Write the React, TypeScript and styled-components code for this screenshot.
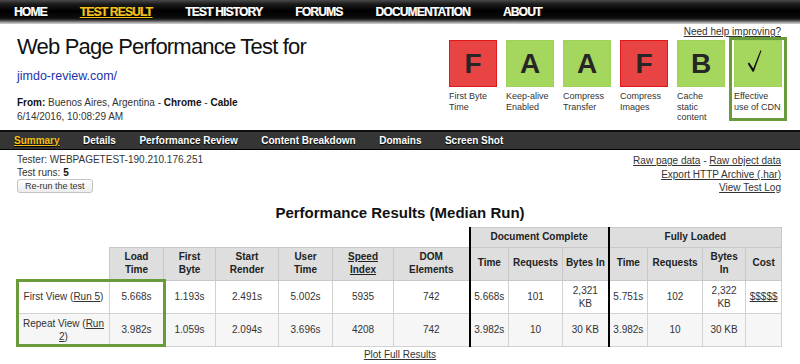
import React from "react";
import styled, { createGlobalStyle, css } from "styled-components";

const Global = createGlobalStyle`
  html, body { margin: 0; padding: 0; background: #fff; }
  body {
    font-family: "Liberation Sans", Arial, Helvetica, sans-serif;
    color: #222;
    width: 800px;
    height: 364px;
    overflow: hidden;
  }
  a { color: inherit; }
`;

const Page = styled.div`
  width: 800px;
`;

const TopNav = styled.nav`
  height: 24px;
  box-sizing: border-box;
  display: flex;
  align-items: center;
  gap: 33px;
  padding: 0 0 1px 14px;
  background: linear-gradient(
    to bottom,
    #4a4a4a 0px,
    #1c1c1c 4px,
    #000 11px,
    #0c0c0c 18px,
    #333 20px,
    #8c8c8c 22px,
    #d8d8d8 24px
  );
`;

const TopLink = styled.a<{ $active?: boolean }>`
  font-size: 12px;
  font-weight: 700;
  letter-spacing: -0.8px;
  color: #fff;
  text-decoration: none;
  text-shadow: 0 1px 1px #000, 0.4px 0 0 currentColor;
  white-space: nowrap;
  ${(p) =>
    p.$active &&
    css`
      color: #f4c21a;
      text-decoration: underline;
      text-underline-offset: 1px;
    `}
`;

const Header = styled.header`
  height: 106px;
  display: flex;
  justify-content: space-between;
  padding: 0 18px 0 17px;
`;

const TitleBlock = styled.div`
  padding-top: 10px;
`;

const Title = styled.h1`
  margin: 0;
  font-size: 22px;
  line-height: 26px;
  font-weight: 400;
  letter-spacing: -0.8px;
  color: #111;
`;

const UrlLink = styled.a`
  display: block;
  margin-top: 9px;
  font-size: 12.5px;
  line-height: 15px;
  color: #2233a8;
  text-decoration: none;
`;

const MetaLine = styled.div<{ $first?: boolean }>`
  font-size: 10px;
  line-height: 13.5px;
  color: #333;
  margin-top: ${(p) => (p.$first ? "12px" : "0")};
  b { color: #111; }
`;

const GradesBlock = styled.div`
  display: flex;
  flex-direction: column;
  align-items: flex-end;
  padding-top: 2px;
`;

const HelpLink = styled.a`
  font-size: 10px;
  line-height: 12px;
  color: #333;
  text-decoration: underline;
  margin-right: 1px;
`;

const Grades = styled.div`
  display: flex;
  gap: 9px;
  margin-top: 2px;
`;

const GradeItem = styled.div<{ $highlight?: boolean }>`
  position: relative;
  width: 48px;
  ${(p) =>
    p.$highlight &&
    css`
      &::after {
        content: "";
        position: absolute;
        top: -3px;
        left: -5px;
        right: -5px;
        height: 84px;
        border: 3px solid #6a9b3a;
        box-sizing: border-box;
        pointer-events: none;
      }
    `}
`;

const GradeBox = styled.div<{ $tone: "bad" | "good" }>`
  width: 48px;
  height: 47px;
  box-sizing: border-box;
  display: flex;
  align-items: center;
  justify-content: center;
  font-size: 28px;
  font-weight: 700;
  color: #262626;
  background: ${(p) => (p.$tone === "bad" ? "#e84444" : "#a5d65e")};
  border: 1px solid ${(p) => (p.$tone === "bad" ? "#e01818" : "#9fd058")};
`;

const GradeLabel = styled.div`
  margin-top: 4px;
  font-size: 9px;
  line-height: 10.5px;
  color: #333;
`;

const SubNav = styled.nav`
  height: 20px;
  box-sizing: border-box;
  display: flex;
  align-items: center;
  gap: 23.5px;
  padding: 0 0 0 14px;
  background: #353535;
  border-top: 2px solid #0e0e0e;
  border-bottom: 1px solid #000;
`;

const SubLink = styled.a<{ $active?: boolean }>`
  font-size: 10px;
  font-weight: 700;
  color: #fff;
  text-decoration: none;
  text-shadow: 0 1px 1px #000;
  white-space: nowrap;
  ${(p) =>
    p.$active &&
    css`
      color: #f4c21a;
      text-decoration: underline;
    `}
`;

const Info = styled.section`
  display: flex;
  justify-content: space-between;
  padding: 3px 19px 0 17px;
`;

const InfoLeft = styled.div`
  font-size: 10px;
  line-height: 13px;
  color: #333;
  b { color: #111; }
`;

const RerunButton = styled.button`
  display: block;
  height: 14px;
  padding: 0 7px;
  font-family: inherit;
  font-size: 9px;
  line-height: 12px;
  color: #333;
  background: linear-gradient(#fff, #ececec);
  border: 1px solid #c4c4c4;
  border-radius: 3px;
`;

const InfoRight = styled.div`
  text-align: right;
  font-size: 10px;
  line-height: 13.5px;
  color: #333;
  padding-top: 1px;
  a { text-decoration: underline; }
`;

const Heading = styled.h2`
  margin: 9px 0 0;
  text-align: center;
  font-size: 15px;
  line-height: 18px;
  font-weight: 700;
  color: #111;
`;

const TableWrap = styled.div`
  position: relative;
  margin: 5px 19px 0 17px;
`;

const Highlight = styled.div`
  position: absolute;
  left: -1px;
  top: 52px;
  width: 150px;
  height: 68px;
  border: 3px solid #6a9b3a;
  box-sizing: border-box;
  pointer-events: none;
`;

const Table = styled.table`
  width: 764px;
  table-layout: fixed;
  border-collapse: collapse;
  font-size: 10px;
  color: #333;
`;

const Th = styled.th<{ $sep?: boolean; $blank?: boolean; $h: number }>`
  height: ${(p) => p.$h}px;
  padding: 0 2px;
  box-sizing: border-box;
  font-weight: 700;
  line-height: 12.5px;
  color: #222;
  text-align: center;
  vertical-align: middle;
  background: ${(p) => (p.$blank ? "transparent" : "#dedede")};
  border: ${(p) => (p.$blank ? "none" : "1px solid #c8c8c8")};
  ${(p) => p.$sep && css`border-left: 2px solid #000;`}
  a { text-decoration: underline; color: #222; }
`;

const Tr = styled.tr<{ $alt?: boolean }>`
  background: ${(p) => (p.$alt ? "#f6f6f6" : "#fff")};
`;

const Td = styled.td<{ $sep?: boolean }>`
  height: 33px;
  padding: 0 2px;
  box-sizing: border-box;
  text-align: center;
  vertical-align: middle;
  line-height: 13px;
  border: 1px solid #d2d2d2;
  ${(p) => p.$sep && css`border-left: 2px solid #000;`}
  a { text-decoration: underline; color: #333; }
`;

const PlotLink = styled.a`
  display: block;
  width: fit-content;
  margin: 1px auto 0;
  font-size: 10px;
  line-height: 13px;
  color: #333;
  text-decoration: underline;
`;

const Check = () => (
  <svg width="48" height="47" viewBox="0 0 48 47" aria-hidden="true">
    <path
      d="M13.2 23.6 L14.8 22.4 L19 28.6 L26.6 9.8 L27.6 10.3 L19.6 32 L18.4 32 Z"
      fill="#111"
    />
  </svg>
);

type Grade = { value: string; tone: "bad" | "good"; label: string; check?: boolean };

const grades: Grade[] = [
  { value: "F", tone: "bad", label: "First Byte Time" },
  { value: "A", tone: "good", label: "Keep-alive Enabled" },
  { value: "A", tone: "good", label: "Compress Transfer" },
  { value: "F", tone: "bad", label: "Compress Images" },
  { value: "B", tone: "good", label: "Cache static content" },
  { value: "", tone: "good", label: "Effective use of CDN", check: true },
];

const cols = [92, 54, 52, 63, 54, 61, 76, 39, 54, 46, 39, 55, 43, 36];

type Row = {
  label: React.ReactNode;
  cells: React.ReactNode[];
};

const rows: Row[] = [
  {
    label: (
      <>
        First View (<a href="#">Run 5</a>)
      </>
    ),
    cells: ["5.668s", "1.193s", "2.491s", "5.002s", "5935", "742", "5.668s", "101", "2,321 KB", "5.751s", "102", "2,322 KB", <a href="#">$$$$$</a>],
  },
  {
    label: (
      <>
        Repeat View (<a href="#">Run 2</a>)
      </>
    ),
    cells: ["3.982s", "1.059s", "2.094s", "3.696s", "4208", "742", "3.982s", "10", "30 KB", "3.982s", "10", "30 KB", ""],
  },
];

const subHeads: React.ReactNode[] = [
  <>Load<br />Time</>,
  <>First<br />Byte</>,
  <>Start<br />Render</>,
  <>User<br />Time</>,
  <a href="#">Speed<br />Index</a>,
  <>DOM<br />Elements</>,
  "Time",
  "Requests",
  "Bytes In",
  "Time",
  "Requests",
  <>Bytes<br />In</>,
  "Cost",
];

export default function App() {
  return (
    <Page>
      <Global />
      <TopNav>
        <TopLink href="#">HOME</TopLink>
        <TopLink href="#" $active>TEST RESULT</TopLink>
        <TopLink href="#">TEST HISTORY</TopLink>
        <TopLink href="#">FORUMS</TopLink>
        <TopLink href="#">DOCUMENTATION</TopLink>
        <TopLink href="#">ABOUT</TopLink>
      </TopNav>

      <Header>
        <TitleBlock>
          <Title>Web Page Performance Test for</Title>
          <UrlLink href="#">jimdo-review.com/</UrlLink>
          <MetaLine $first>
            <b>From:</b> Buenos Aires, Argentina - <b>Chrome</b> - <b>Cable</b>
          </MetaLine>
          <MetaLine>6/14/2016, 10:08:29 AM</MetaLine>
        </TitleBlock>
        <GradesBlock>
          <HelpLink href="#">Need help improving?</HelpLink>
          <Grades>
            {grades.map((g, i) => (
              <GradeItem key={i} $highlight={g.check}>
                <GradeBox $tone={g.tone}>{g.check ? <Check /> : g.value}</GradeBox>
                <GradeLabel>{g.label}</GradeLabel>
              </GradeItem>
            ))}
          </Grades>
        </GradesBlock>
      </Header>

      <SubNav>
        <SubLink href="#" $active>Summary</SubLink>
        <SubLink href="#">Details</SubLink>
        <SubLink href="#">Performance Review</SubLink>
        <SubLink href="#">Content Breakdown</SubLink>
        <SubLink href="#">Domains</SubLink>
        <SubLink href="#">Screen Shot</SubLink>
      </SubNav>

      <Info>
        <InfoLeft>
          <div>Tester: WEBPAGETEST-190.210.176.251</div>
          <div>
            Test runs: <b>5</b>
          </div>
          <RerunButton type="button">Re-run the test</RerunButton>
        </InfoLeft>
        <InfoRight>
          <div>
            <a href="#">Raw page data</a> - <a href="#">Raw object data</a>
          </div>
          <div>
            <a href="#">Export HTTP Archive (.har)</a>
          </div>
          <div>
            <a href="#">View Test Log</a>
          </div>
        </InfoRight>
      </Info>

      <Heading>Performance Results (Median Run)</Heading>

      <TableWrap>
        <Table>
          <colgroup>
            {cols.map((w, i) => (
              <col key={i} style={{ width: w }} />
            ))}
          </colgroup>
          <thead>
            <tr>
              <Th $blank $h={20} colSpan={7} />
              <Th $h={20} $sep colSpan={3}>Document Complete</Th>
              <Th $h={20} $sep colSpan={4}>Fully Loaded</Th>
            </tr>
            <tr>
              <Th $blank $h={33} />
              {subHeads.map((h, i) => (
                <Th key={i} $h={33} $sep={i === 6 || i === 9}>
                  {h}
                </Th>
              ))}
            </tr>
          </thead>
          <tbody>
            {rows.map((r, ri) => (
              <Tr key={ri} $alt={ri === 1}>
                <Td>{r.label}</Td>
                {r.cells.map((c, ci) => (
                  <Td key={ci} $sep={ci === 6 || ci === 9}>
                    {c}
                  </Td>
                ))}
              </Tr>
            ))}
          </tbody>
        </Table>
        <Highlight />
      </TableWrap>

      <PlotLink href="#">Plot Full Results</PlotLink>
    </Page>
  );
}
